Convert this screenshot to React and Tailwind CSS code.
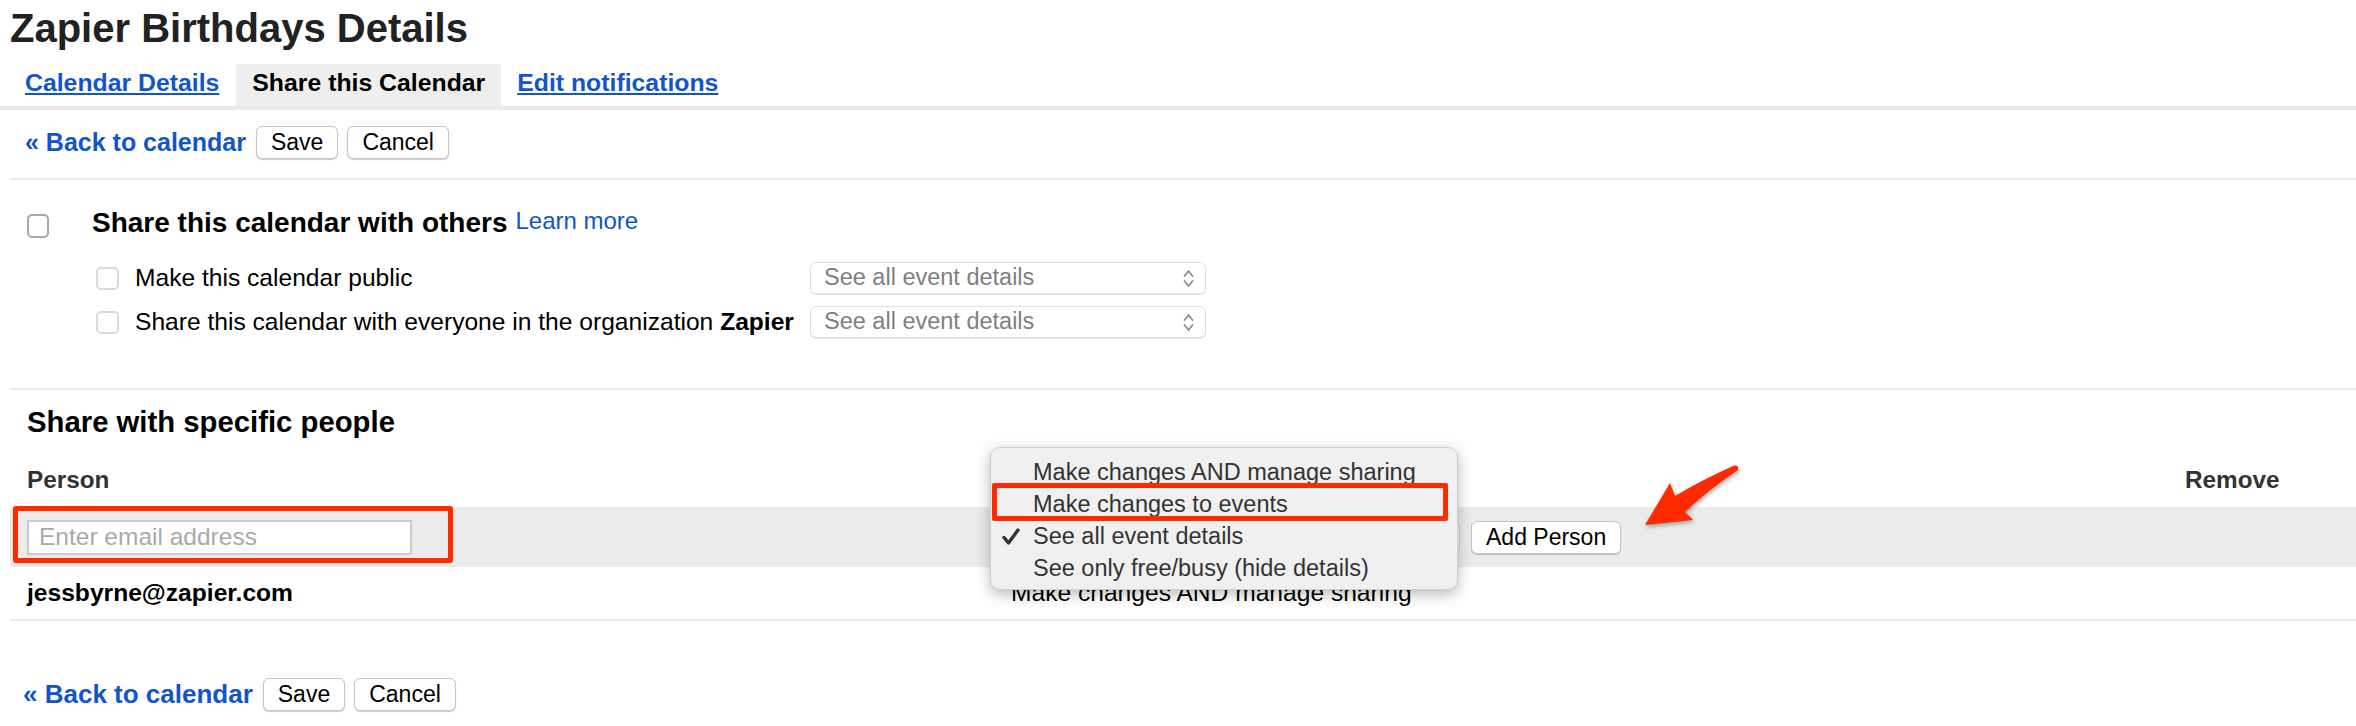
import React from 'react';

function Btn({ children, className = '' }) {
  return (
    <button className={`h-[33px] px-[14px] bg-white border border-[#c4c4c4] rounded-[6px] shadow-[0_1px_1px_rgba(0,0,0,0.2)] text-[23px] leading-none text-black ${className}`}>
      {children}
    </button>
  );
}

function BackRow({ className = '', linkSize = 'text-[25px]' }) {
  return (
    <div className={`flex items-center ${className}`}>
      <a href="#" className={`${linkSize} font-bold leading-[33px] text-[#1155cc]`}>« Back to calendar</a>
      <Btn className="ml-[10px]">Save</Btn>
      <Btn className="ml-[9px]">Cancel</Btn>
    </div>
  );
}

function Checkbox({ big }) {
  return big ? (
    <span className="block w-[22px] h-[24px] shrink-0 rounded-[5px] border-2 border-[#a8a8a8] bg-white" />
  ) : (
    <span className="block w-[23px] h-[23px] shrink-0 rounded-[5px] border-2 border-[#dadada] bg-white" />
  );
}

function SelectBox({ value, className = '' }) {
  return (
    <div className={`h-[32px] flex items-center justify-between pl-[13px] pr-[11px] bg-white border border-[#dedede] rounded-[6px] shadow-[0_1px_1px_rgba(0,0,0,0.1)] ${className}`}>
      <span className="text-[23.5px] leading-none text-[#808080]">{value}</span>
      <svg width="11" height="21" viewBox="0 0 11 21" fill="none" stroke="#8a8a8a" strokeWidth="1.7" strokeLinecap="round" strokeLinejoin="round">
        <path d="M1.5 8 L5.5 3 L9.5 8 M1.5 13 L5.5 18 L9.5 13" />
      </svg>
    </div>
  );
}

const menuItems = [
  { label: 'Make changes AND manage sharing' },
  { label: 'Make changes to events' },
  { label: 'See all event details', checked: true },
  { label: 'See only free/busy (hide details)' },
];

export default function App() {
  return (
    <div className="relative min-h-screen bg-white text-black font-['Liberation_Sans',Arial,sans-serif]">
      {/* Title */}
      <h1 className="pl-[10px] pt-[4px] text-[40px] font-bold leading-[48px] text-[#222]">Zapier Birthdays Details</h1>

      {/* Tabs */}
      <div className="mt-[12px] flex pl-[8px] border-b-4 border-[#ebebeb] text-[24.8px] font-bold">
        <a href="#" className="px-[17px] h-[42px] leading-[38px] text-[#1155cc] underline">Calendar Details</a>
        <span className="px-[16px] h-[42px] leading-[38px] text-black bg-[#eeeeee]">Share this Calendar</span>
        <a href="#" className="px-[16px] h-[42px] leading-[38px] text-[#1155cc] underline">Edit notifications</a>
      </div>

      <BackRow className="mt-[16px] pl-[25px]" />
      <div className="mt-[19px] ml-[10px] h-[2px] bg-[#ebebeb]" />

      {/* Share with others */}
      <div className="mt-[27px] flex items-start pl-[27px]">
        <div className="mt-[7px]"><Checkbox big /></div>
        <h2 className="ml-[43px] text-[28px] font-bold leading-[32px]">Share this calendar with others</h2>
        <a href="#" className="ml-[8px] text-[24px] leading-[28px] text-[#1155cc]">Learn more</a>
      </div>

      <div className="mt-[17px]">
        <div className="grid grid-cols-[810px_396px] h-[44px] items-center">
          <label className="flex items-center gap-[16px] pl-[96px] text-[24.6px] leading-[28px]">
            <Checkbox />
            <span>Make this calendar public</span>
          </label>
          <SelectBox value="See all event details" />
        </div>
        <div className="grid grid-cols-[810px_396px] h-[44px] items-center">
          <label className="flex items-center gap-[16px] pl-[96px] text-[24.6px] leading-[28px] whitespace-nowrap">
            <Checkbox />
            <span>Share this calendar with everyone in the organization <b>Zapier</b></span>
          </label>
          <SelectBox value="See all event details" />
        </div>
      </div>

      <div className="mt-[44px] ml-[10px] h-[2px] bg-[#ebebeb]" />

      {/* Share with specific people */}
      <h2 className="mt-[16px] pl-[27px] text-[29.3px] font-bold leading-[32px]">Share with specific people</h2>

      <div className="mt-[28px] ml-[10px] grid grid-cols-[1001px_1174px_1fr] h-[28px] text-[24.3px] font-bold leading-[28px] text-[#333]">
        <span className="pl-[17px]">Person</span>
        <span />
        <span>Remove</span>
      </div>

      <div className="relative mt-[13px] ml-[10px] grid grid-cols-[1001px_1174px_1fr] h-[60px] items-center bg-[#ebebeb]">
        <div className="pl-[17px]">
          <input
            type="text"
            placeholder="Enter email address"
            className="w-[385px] h-[35px] border-2 border-[#cbcbcb] bg-white px-[10px] text-[24.5px] leading-none placeholder:text-[#a9a9a9] outline-none"
          />
        </div>
        <div className="flex items-center">
          <div className="w-[449px] h-[32px] bg-white border border-[#cfcfcf] rounded-[6px]" />
          <Btn className="ml-[11px] h-[32px] px-[14px]">Add Person</Btn>
        </div>
        <div />

        {/* annotation box around input */}
        <div className="absolute left-[3px] top-[-1px] w-[440px] h-[57px] border-[5px] border-[#ff2a00] rounded-[3px] pointer-events-none" />

        {/* open permission menu */}
        <div className="absolute left-[980px] top-[-60px] z-10 w-[468px] h-[143px] pt-[8px] rounded-[10px] bg-[#f0f0f0] border border-[#cfcfcf] shadow-[0_4px_14px_rgba(0,0,0,0.28)] text-[23.5px] leading-[32px] text-[#333]">
          {menuItems.map((item) => (
            <div key={item.label} className="flex items-center h-[32px]">
              <span className="w-[42px] pl-[11px] flex items-center">
                {item.checked && (
                  <svg width="18" height="17" viewBox="0 0 18 17" fill="none" stroke="#333" strokeWidth="3.4" strokeLinecap="round" strokeLinejoin="round">
                    <path d="M2 9.5 L6.5 15 L16 2" />
                  </svg>
                )}
              </span>
              <span>{item.label}</span>
            </div>
          ))}
          <div className="absolute left-[1px] top-[35px] w-[456px] h-[38px] border-[5px] border-[#ff2a00] rounded-[2px] pointer-events-none" />
        </div>

        {/* red arrow */}
        <svg
          className="absolute left-[1628px] top-[-47px] z-10 drop-shadow-[1px_2px_2px_rgba(0,0,0,0.35)]"
          width="106" height="72" viewBox="0 0 106 72"
        >
          <path d="M7 65 L32 23 L37 36 Q64 20 95 6 Q101 4 100 10 Q70 30 47 52 L55 60 Z" fill="#ff2a00" />
        </svg>
      </div>

      <div className="ml-[10px] grid grid-cols-[1001px_1174px_1fr] h-[52px] items-center text-[24.6px] leading-[28px]">
        <span className="pl-[17px] font-bold">jessbyrne@zapier.com</span>
        <span>Make changes AND manage sharing</span>
        <span />
      </div>
      <div className="ml-[10px] h-[2px] bg-[#ebebeb]" />

      <BackRow className="mt-[57px] pl-[23px]" linkSize="text-[26px]" />
    </div>
  );
}
